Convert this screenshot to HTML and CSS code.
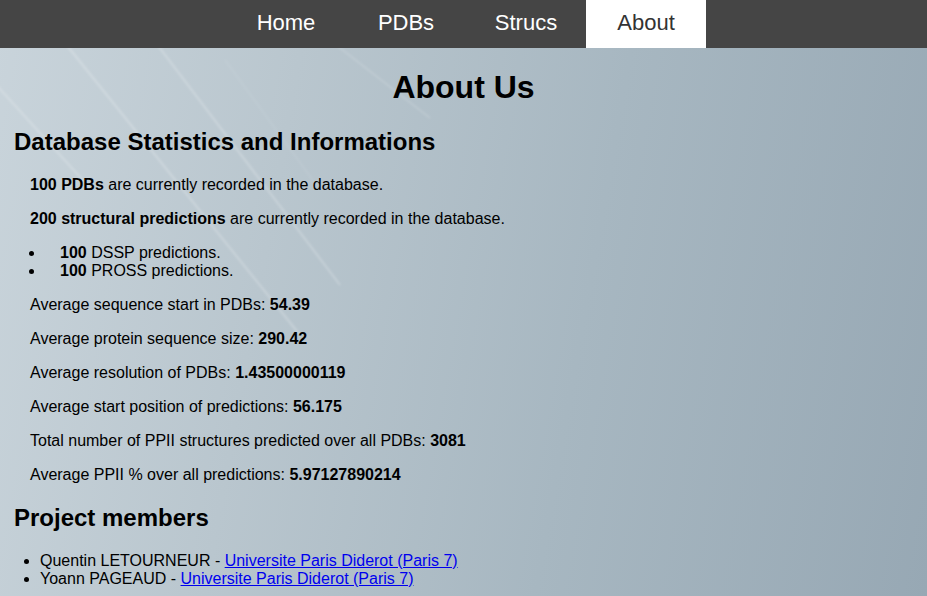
FILE: index.html
```html
<!DOCTYPE html>
<html lang="en">
<head>
<meta charset="utf-8">
<title>About Us</title>
<link rel="stylesheet" href="styles.css">
</head>
<body>
<nav class="topnav">
  <ul class="menu">
    <li><a class="menu-link" href="#">Home</a></li>
    <li><a class="menu-link" href="#">PDBs</a></li>
    <li><a class="menu-link" href="#">Strucs</a></li>
    <li><a class="menu-link active" href="#">About</a></li>
  </ul>
</nav>
<main class="content">
  <h1 class="title">About Us</h1>
  <h2 class="section-title">Database Statistics and Informations</h2>
  <div class="section">
    <p><b>100 PDBs</b> are currently recorded in the database.</p>
    <p><b>200 structural predictions</b> are currently recorded in the database.</p>
    <ul class="pred-list">
      <li><b>100</b> DSSP predictions.</li>
      <li><b>100</b> PROSS predictions.</li>
    </ul>
    <p>Average sequence start in PDBs: <b>54.39</b></p>
    <p>Average protein sequence size: <b>290.42</b></p>
    <p>Average resolution of PDBs: <b>1.43500000119</b></p>
    <p>Average start position of predictions: <b>56.175</b></p>
    <p>Total number of PPII structures predicted over all PDBs: <b>3081</b></p>
    <p>Average PPII % over all predictions: <b>5.97127890214</b></p>
  </div>
  <h2 class="section-title">Project members</h2>
  <ul class="members">
    <li>Quentin LETOURNEUR - <a href="#">Universite Paris Diderot (Paris 7)</a></li>
    <li>Yoann PAGEAUD - <a href="#">Universite Paris Diderot (Paris 7)</a></li>
  </ul>
</main>
</body>
</html>
```
FILE: styles.css
```css
html {
  min-height: 100%;
  background: #b4c2ca;
}
body {
  margin: 0;
  min-height: 596px;
  font-family: "Liberation Sans", Arial, sans-serif;
  font-size: 16px;
  color: #000;
  background:
    url("data:image/svg+xml;utf8,<svg xmlns='http://www.w3.org/2000/svg' width='927' height='596'><defs><filter id='b'><feGaussianBlur stdDeviation='1'/></filter></defs><g filter='url(%23b)' stroke='white' fill='none'><line x1='40' y1='12' x2='300' y2='335' stroke-opacity='0.22' stroke-width='2'/><line x1='140' y1='22' x2='340' y2='285' stroke-opacity='0.22' stroke-width='2'/><line x1='-10' y1='78' x2='90' y2='188' stroke-opacity='0.2' stroke-width='2'/><line x1='335' y1='44' x2='430' y2='118' stroke-opacity='0.14' stroke-width='1.6'/><line x1='225' y1='60' x2='320' y2='190' stroke-opacity='0.08' stroke-width='1.5'/></g></svg>") no-repeat 0 0,
    linear-gradient(100deg, #c9d4db 0%, #b9c6ce 30%, #a7b7c1 62%, #97a8b4 100%);
}
.topnav {
  background: #454545;
  height: 48px;
}
.menu {
  list-style: none;
  margin: 0;
  padding: 0 0 0 5px;
  display: flex;
  justify-content: center;
}
.menu-link {
  display: block;
  width: 120px;
  line-height: 46px;
  text-align: center;
  font-size: 22px;
  color: #fff;
  text-decoration: none;
}
.menu-link.active {
  background: #fff;
  color: #333;
  height: 48px;
}
.content {
  padding: 0 14px;
}
.title {
  font-size: 32px;
  text-align: center;
  margin: 21px 0 22px;
}
.section-title {
  font-size: 24px;
  margin: 20px 0;
}
.section {
  margin-left: 16px;
}
.section p {
  margin: 16px 0;
}
.pred-list {
  margin: 16px 0;
  padding-left: 15px;
}
.pred-list li {
  padding-left: 15px;
}
.members {
  margin: 16px 0 0;
  padding-left: 26px;
}
.members a {
  color: #0000ee;
}
```
